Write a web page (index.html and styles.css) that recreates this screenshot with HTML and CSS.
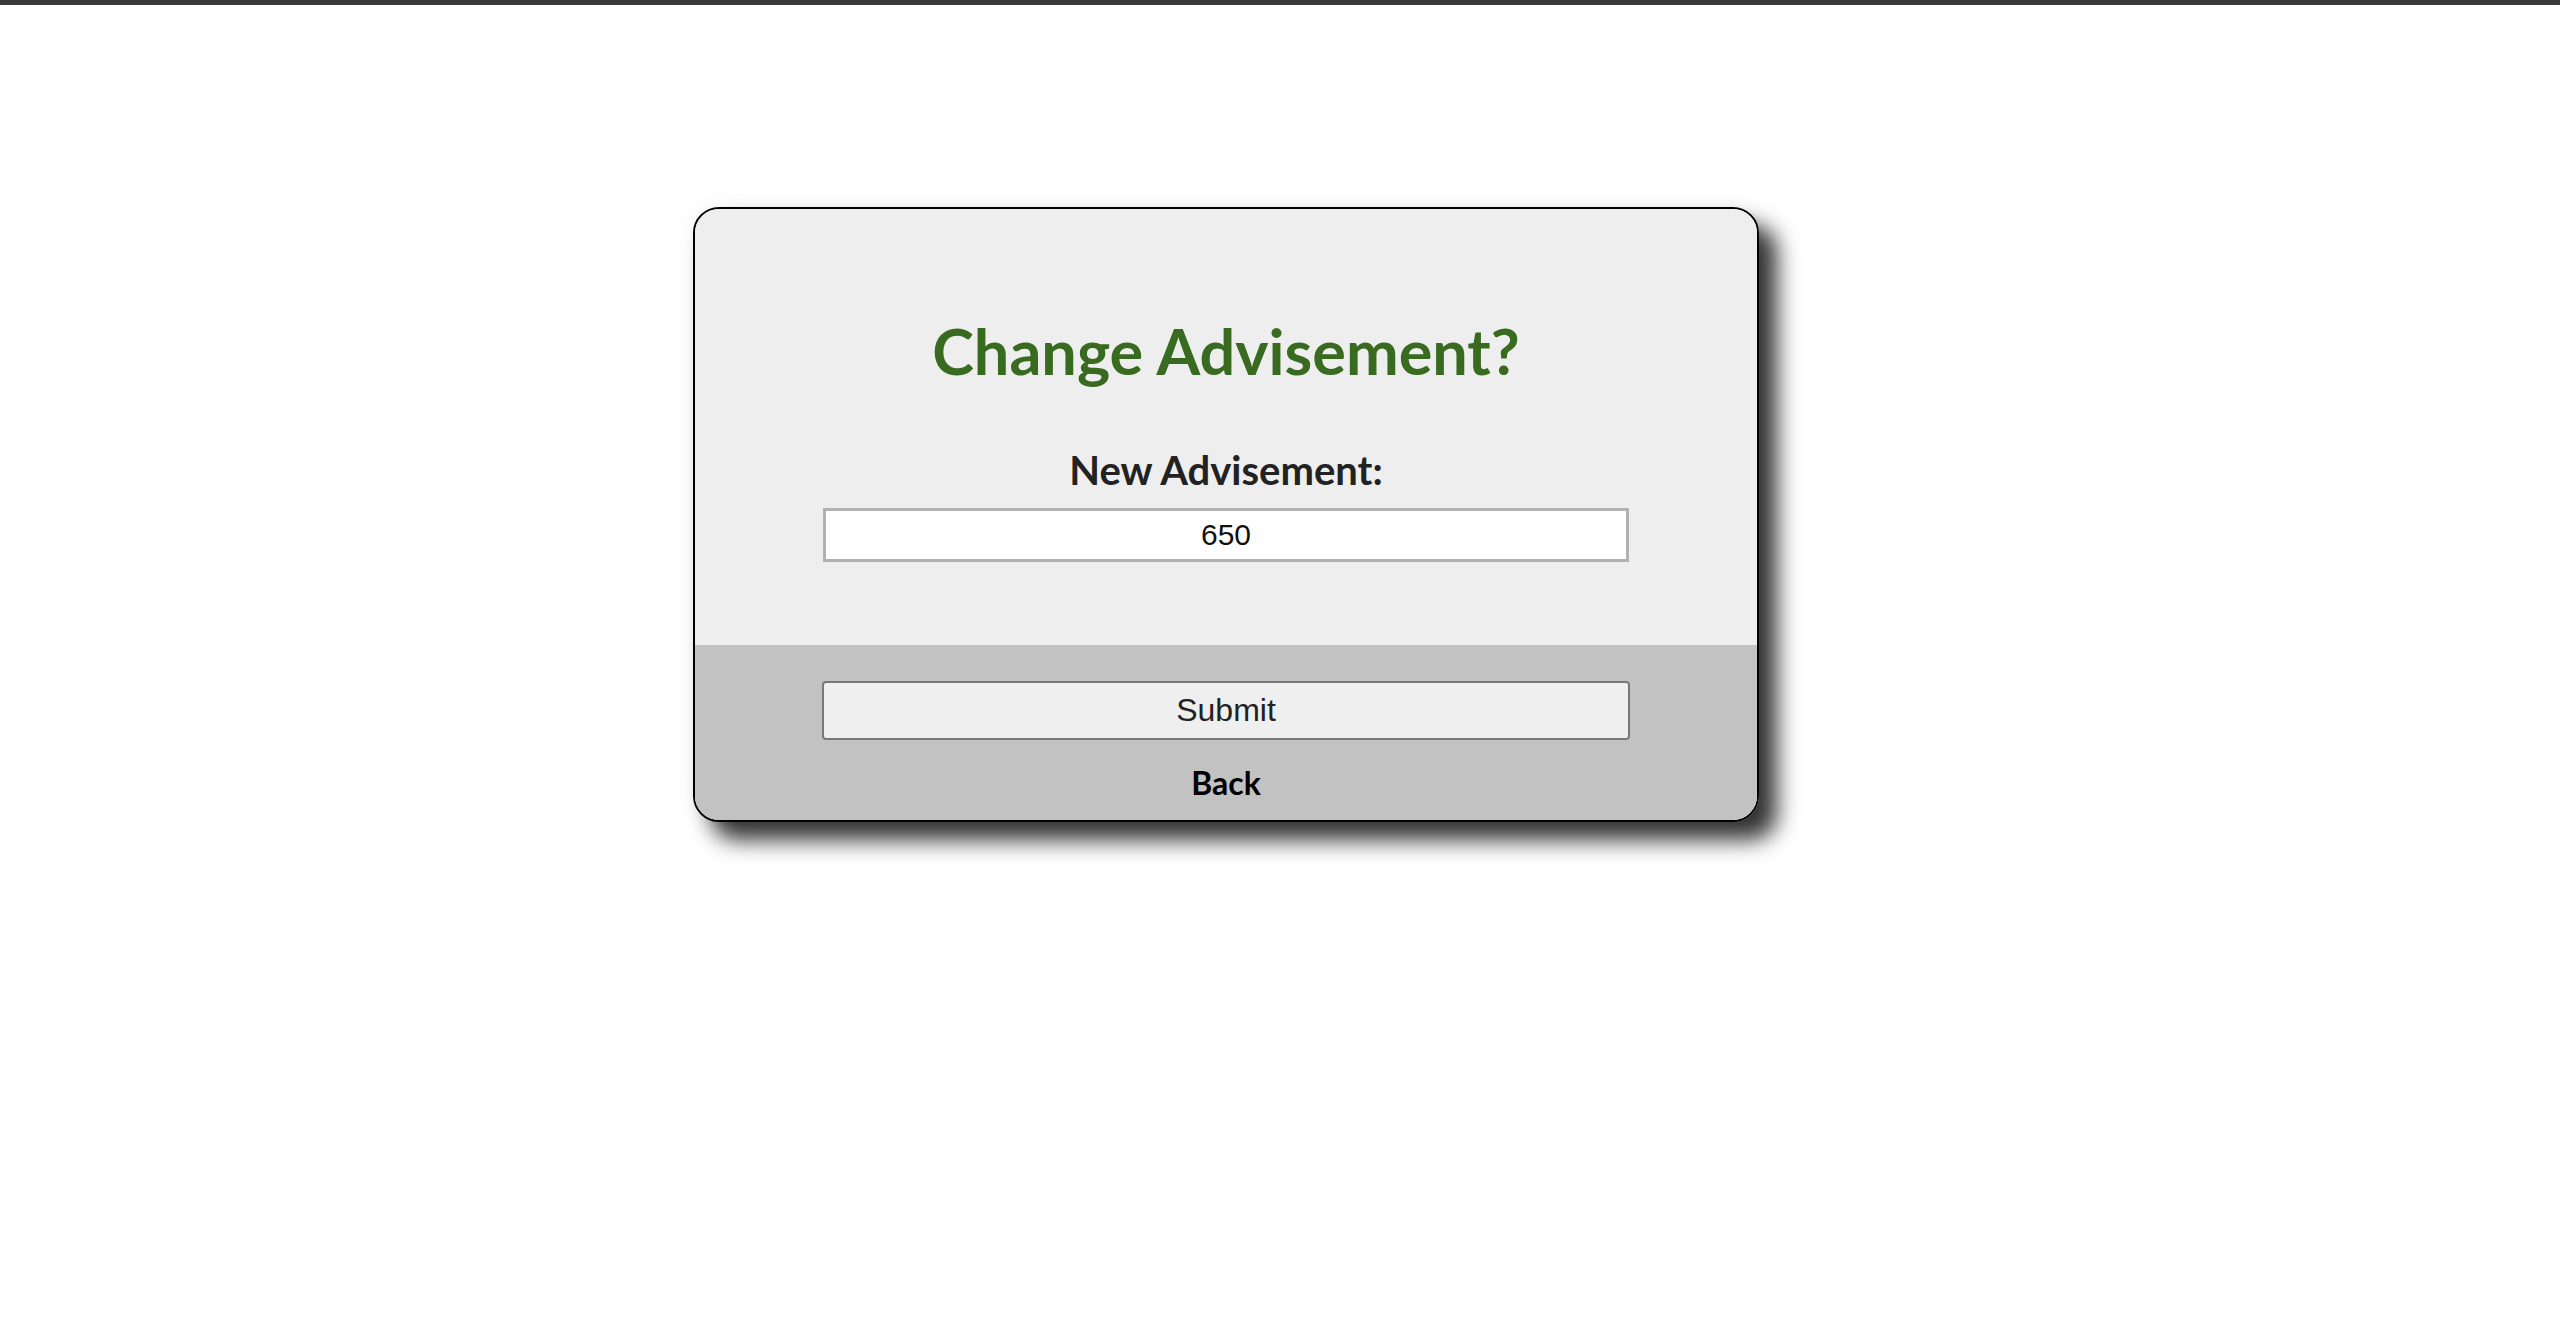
FILE: index.html
```html
<!DOCTYPE html>
<html lang="en">
<head>
<meta charset="utf-8">
<title>Change Advisement</title>
<link rel="stylesheet" href="styles.css">
</head>
<body>
<div class="page">
  <form class="card">
    <div class="card-top">
      <h1 class="title">Change Advisement?</h1>
      <label class="label" for="adv">New Advisement:</label>
      <input class="field" id="adv" type="text" value="650">
    </div>
    <div class="card-bottom">
      <button class="submit" type="button">Submit</button>
      <a class="back" href="#">Back</a>
    </div>
  </form>
</div>
</body>
</html>
```

FILE: styles.css
```css
html, body {
  margin: 0;
  padding: 0;
  background: #ffffff;
}
body {
  border-top: 5px solid #3a3a3a;
  min-height: 1331px;
  box-sizing: border-box;
}
.page {
  display: flex;
  padding: 202px 0 0 693px;
}
.card {
  width: 1066px;
  box-sizing: border-box;
  border: 2px solid #000;
  border-radius: 26px;
  overflow: hidden;
  box-shadow: 18px 18px 22px rgba(0, 0, 0, 0.8), 0 0 24px rgba(0, 0, 0, 0.06);
  display: flex;
  flex-direction: column;
  margin: 0;
}
.card-top {
  background: #eeeeee;
  display: flex;
  flex-direction: column;
  align-items: center;
  padding: 110px 0 83px;
}
.title {
  margin: 0;
  font-family: "Lato", "DejaVu Sans", sans-serif;
  font-weight: 700;
  font-size: 63px;
  line-height: 1;
  color: #386a1f;
}
.label {
  margin-top: 68px;
  font-family: "Lato", "DejaVu Sans", sans-serif;
  font-weight: 700;
  font-size: 40px;
  line-height: 1;
  color: #222;
}
.field {
  margin-top: 18px;
  width: 806px;
  height: 54px;
  box-sizing: border-box;
  border: 3px solid #b1b1b1;
  background: #fff;
  text-align: center;
  font-family: "Liberation Sans", Arial, sans-serif;
  font-size: 30px;
  color: #111;
  padding: 0;
  outline: none;
}
.card-bottom {
  background: #c3c2c3;
  display: flex;
  flex-direction: column;
  align-items: center;
  padding: 36px 0 21px;
}
.submit {
  width: 808px;
  height: 59px;
  box-sizing: border-box;
  border: 2px solid #787878;
  border-radius: 4px;
  background: #efefef;
  font-family: "Liberation Sans", Arial, sans-serif;
  font-size: 32px;
  color: #222;
  padding: 0;
}
.back {
  margin-top: 27px;
  font-family: "Lato", "DejaVu Sans", sans-serif;
  font-weight: 700;
  font-size: 32px;
  line-height: 1;
  color: #000;
  text-decoration: none;
}
```
